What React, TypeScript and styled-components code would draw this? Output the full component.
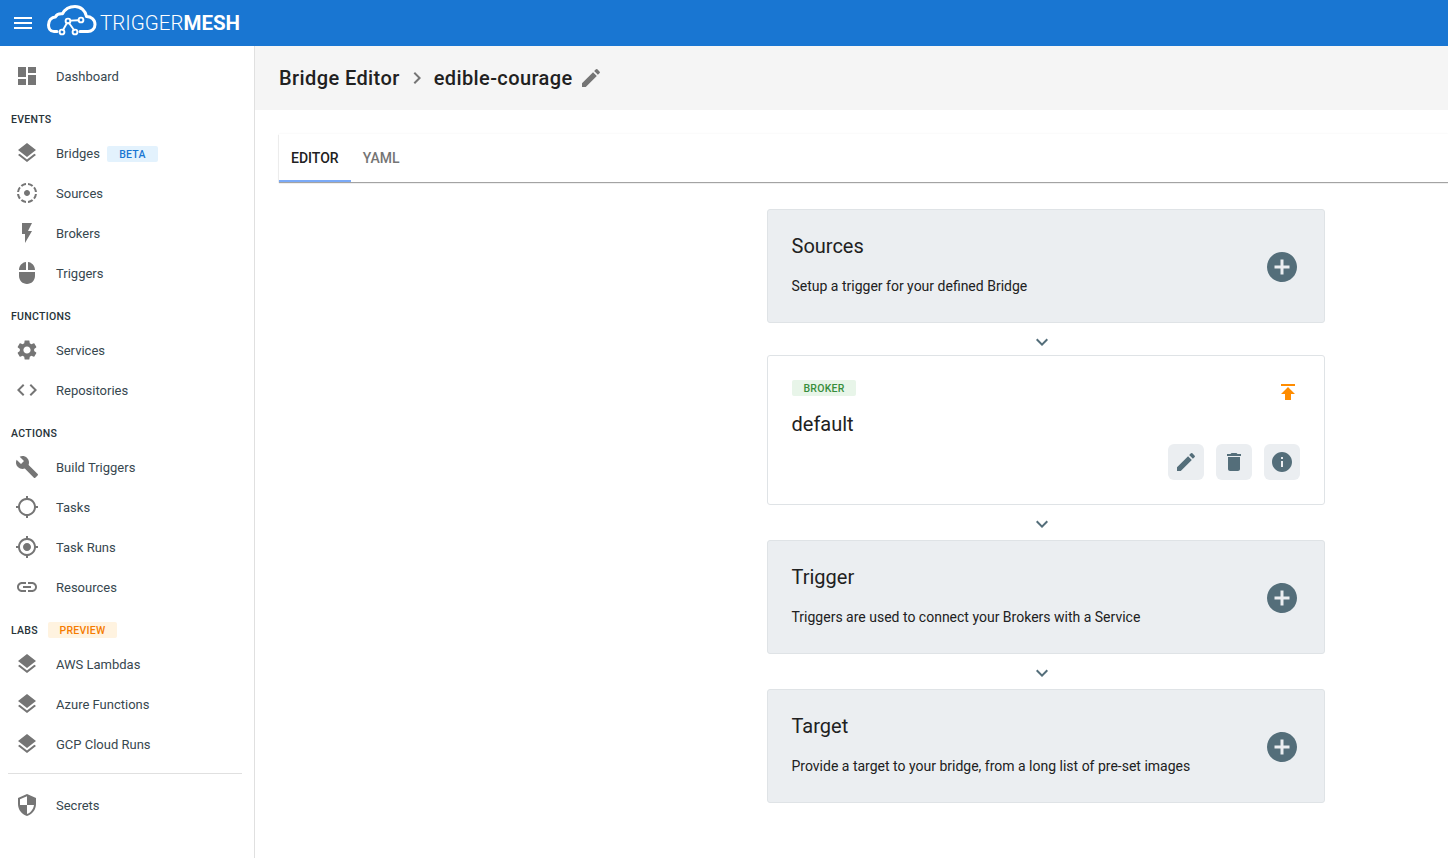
import React from "react";
import styled, {createGlobalStyle} from "styled-components";

const GlobalStyle = createGlobalStyle`
    html, body {
        margin: 0;
        padding: 0;
        height: 100%;
        overflow: hidden;
        background: #fff;
        font-family: Roboto, "Liberation Sans", sans-serif;
    }
`;

const icons = {
    menu: "M3 18h18v-2H3v2zm0-5h18v-2H3v2zm0-7v2h18V6H3z",
    dashboard: "M3 13h8V3H3v10zm0 8h8v-6H3v6zm10 0h8V11h-8v10zm0-18v6h8V3h-8z",
    layers: "M11.99 18.54l-7.37-5.73L3 14.07l9 7 9-7-1.63-1.27-7.38 5.74zM12 16l7.36-5.73L21 9l-9-7-9 7 1.63 1.27L12 16z",
    tilt: "M11 4.07V2.05c-2.01.2-3.84 1-5.32 2.21L7.1 5.69A7.941 7.941 0 0111 4.07zm7.32.19A9.949 9.949 0 0013 2.05v2.02c1.46.18 2.79.76 3.9 1.62l1.42-1.43zM19.93 11h2.02c-.2-2.01-1-3.84-2.21-5.32L18.31 7.1a7.941 7.941 0 011.62 3.9zM5.69 7.1L4.26 5.68A9.949 9.949 0 002.05 11h2.02c.18-1.46.76-2.79 1.62-3.9zM4.07 13H2.05c.2 2.01 1 3.84 2.21 5.32l1.43-1.43A7.868 7.868 0 014.07 13zM15 12c0-1.66-1.34-3-3-3s-3 1.34-3 3 1.34 3 3 3 3-1.34 3-3zm3.31 4.9l1.43 1.43a9.981 9.981 0 002.21-5.32h-2.02a7.945 7.945 0 01-1.62 3.89zM13 19.93v2.02c2.01-.2 3.84-1 5.32-2.21l-1.43-1.43c-1.1.86-2.43 1.44-3.89 1.62zm-7.32-.19A9.981 9.981 0 0011 21.95v-2.02a7.945 7.945 0 01-3.89-1.62l-1.43 1.43z",
    flash: "M7 2v11h3v9l7-12h-4l4-8z",
    mouse: "M13 1.07V9h7c0-4.08-3.05-7.44-7-7.93zM4 15c0 4.42 3.58 8 8 8s8-3.58 8-8v-4H4v4zm7-13.93C7.05 1.56 4 4.92 4 9h7V1.07z",
    settings: "M19.14 12.94c.04-.3.06-.61.06-.94 0-.32-.02-.64-.07-.94l2.03-1.58c.18-.14.23-.41.12-.61l-1.92-3.32c-.12-.22-.37-.29-.59-.22l-2.39.96c-.5-.38-1.03-.7-1.62-.94l-.36-2.54c-.04-.24-.24-.41-.48-.41h-3.84c-.24 0-.43.17-.47.41l-.36 2.54c-.59.24-1.13.57-1.62.94l-2.39-.96c-.22-.08-.47 0-.59.22L2.74 8.87c-.12.21-.08.47.12.61l2.03 1.58c-.05.3-.09.63-.09.94s.02.64.07.94l-2.03 1.58c-.18.14-.23.41-.12.61l1.92 3.32c.12.22.37.29.59.22l2.39-.96c.5.38 1.03.7 1.62.94l.36 2.54c.05.24.24.41.48.41h3.84c.24 0 .44-.17.47-.41l.36-2.54c.59-.24 1.13-.56 1.62-.94l2.39.96c.22.08.47 0 .59-.22l1.92-3.32c.12-.22.07-.47-.12-.61l-2.01-1.58zM12 15.6c-1.98 0-3.6-1.62-3.6-3.6s1.62-3.6 3.6-3.6 3.6 1.62 3.6 3.6-1.62 3.6-3.6 3.6z",
    code: "M9.4 16.6L4.8 12l4.6-4.6L8 6l-6 6 6 6 1.4-1.4zm5.2 0l4.6-4.6-4.6-4.6L16 6l6 6-6 6-1.4-1.4z",
    build: "M22.7 19l-9.1-9.1c.9-2.3.4-5-1.5-6.9-2-2-5-2.4-7.4-1.3L9 6 6 9 1.6 4.7C.4 7.1.9 10.1 2.9 12.1c1.9 1.9 4.6 2.4 6.9 1.5l9.1 9.1c.4.4 1 .4 1.4 0l2.3-2.3c.5-.4.5-1.1.1-1.4z",
    gpsOpen: "M20.94 11c-.46-4.17-3.77-7.48-7.94-7.94V1h-2v2.06C6.83 3.52 3.52 6.83 3.06 11H1v2h2.06c.46 4.17 3.77 7.48 7.94 7.94V23h2v-2.06c4.17-.46 7.48-3.77 7.94-7.94H23v-2h-2.06zM12 19c-3.87 0-7-3.13-7-7s3.13-7 7-7 7 3.13 7 7-3.13 7-7 7z",
    gpsFixed: "M12 8c-2.21 0-4 1.79-4 4s1.79 4 4 4 4-1.79 4-4-1.79-4-4-4zm8.94 3c-.46-4.17-3.77-7.48-7.94-7.94V1h-2v2.06C6.83 3.52 3.52 6.83 3.06 11H1v2h2.06c.46 4.17 3.77 7.48 7.94 7.94V23h2v-2.06c4.17-.46 7.48-3.77 7.94-7.94H23v-2h-2.06zM12 19c-3.87 0-7-3.13-7-7s3.13-7 7-7 7 3.13 7 7-3.13 7-7 7z",
    link: "M3.9 12c0-1.71 1.39-3.1 3.1-3.1h4V7H7c-2.76 0-5 2.24-5 5s2.24 5 5 5h4v-1.9H7c-1.71 0-3.1-1.39-3.1-3.1zM8 13h8v-2H8v2zm9-6h-4v1.9h4c1.71 0 3.1 1.39 3.1 3.1s-1.39 3.1-3.1 3.1h-4V17h4c2.76 0 5-2.24 5-5s-2.24-5-5-5z",
    security: "M12 1L3 5v6c0 5.55 3.84 10.74 9 12 5.16-1.26 9-6.45 9-12V5l-9-4zm0 10.99h7c-.53 4.12-3.28 7.79-7 8.94V12H5V6.3l7-3.11v8.8z",
    edit: "M3 17.25V21h3.75L17.81 9.94l-3.75-3.75L3 17.25zM20.71 7.04c.39-.39.39-1.02 0-1.41l-2.34-2.34a.9959.9959 0 00-1.41 0l-1.83 1.83 3.75 3.75 1.83-1.83z",
    trash: "M6 19c0 1.1.9 2 2 2h8c1.1 0 2-.9 2-2V7H6v12zM19 4h-3.5l-1-1h-5l-1 1H5v2h14V4z",
    info: "M12 2C6.48 2 2 6.48 2 12s4.48 10 10 10 10-4.48 10-10S17.52 2 12 2zm1 15h-2v-6h2v6zm0-8h-2V7h2v2z",
    add: "M12 2C6.48 2 2 6.48 2 12s4.48 10 10 10 10-4.48 10-10S17.52 2 12 2zm5 11h-4v4h-2v-4H7v-2h4V7h2v4h4v2z",
    publish: "M5 4v2h14V4H5zm0 10h4v6h6v-6h4l-7-7-7 7z",
    chevronDown: "M16.59 8.59L12 13.17 7.41 8.59 6 10l6 6 6-6z",
    chevronRight: "M10 6L8.59 7.41 13.17 12l-4.58 4.59L10 18l6-6z",
};

type IconName = keyof typeof icons;

const Svg = styled.svg<{ $size: number; $color: string }>`
    display: block;
    flex: none;
    width: ${({$size}) => $size}px;
    height: ${({$size}) => $size}px;
    fill: ${({$color}) => $color};
`;

const Icon: React.FC<{ name: IconName; size?: number; color?: string }> = ({name, size = 24, color = "#757575"}) =>
    <Svg viewBox="0 0 24 24" $size={size} $color={color}><path d={icons[name]}/></Svg>;

const Page = styled.div`
    width: 1448px;
    height: 858px;
    display: flex;
    flex-direction: column;
    overflow: hidden;
`;

const TopBar = styled.header`
    height: 46px;
    flex: none;
    background: #1976d2;
    display: flex;
    align-items: center;
    padding-left: 11px;
    color: #fff;
`;

const Logo = styled.svg`
    width: 50px;
    height: 32px;
    margin: 0 0 4px 12px;
    flex: none;
`;

const Brand = styled.div`
    margin-left: 3px;
    font-size: 20.5px;
    line-height: 46px;
    font-weight: 300;
    b {
        font-weight: 700;
    }
`;

const Body = styled.div`
    flex: 1;
    display: flex;
    min-height: 0;
`;

const Sidebar = styled.nav`
    width: 255px;
    flex: none;
    box-sizing: border-box;
    border-right: 1px solid #e0e0e0;
    padding: 10px 12px 0 8px;
`;

const NavRow = styled.div`
    height: 40px;
    display: flex;
    align-items: center;
    padding-left: 7px;
    font-size: 13px;
    color: #37474f;
`;

const NavIcon = styled.span`
    width: 41px;
    display: flex;
    flex: none;
`;

const SectionTitle = styled.div`
    height: 14px;
    margin: 16px 0 7px 3px;
    display: flex;
    align-items: center;
    font-size: 10.5px;
    font-weight: 500;
    letter-spacing: 0.3px;
    color: #263238;
`;

const Badge = styled.span<{ $bg: string; $fg: string; $width: number }>`
    display: inline-flex;
    align-items: center;
    justify-content: center;
    box-sizing: border-box;
    width: ${({$width}) => $width}px;
    height: 16px;
    border-radius: 2px;
    background: ${({$bg}) => $bg};
    color: ${({$fg}) => $fg};
    font-size: 10.5px;
    font-weight: 500;
    letter-spacing: 0.25px;
`;

const BetaBadge = styled(Badge)`
    margin: 2px 0 0 7px;
`;

const PreviewBadge = styled(Badge)`
    margin-left: 10px;
`;

const SideDivider = styled.hr`
    border: 0;
    height: 1px;
    background: #e0e0e0;
    margin: 9px 0 11px 0;
`;

const Main = styled.main`
    flex: 1;
    min-width: 0;
    display: flex;
    flex-direction: column;
`;

const TitleBar = styled.div`
    height: 64px;
    flex: none;
    background: #f5f5f5;
    display: flex;
    align-items: center;
    padding-left: 24px;
    font-size: 20px;
    font-weight: 500;
    letter-spacing: 0.4px;
    color: #212121;
`;

const CrumbSep = styled.span`
    margin: 0 5px;
    display: flex;
`;

const CrumbEdit = styled.span`
    margin-left: 6px;
    display: flex;
`;

const Tabs = styled.div`
    margin: 24px 0 0 24px;
    height: 48px;
    display: flex;
    flex: none;
    background: #fff;
    box-shadow: 0 1px 1px rgba(0, 0, 0, 0.35), 0 0 2px rgba(0, 0, 0, 0.06);
`;

const Tab = styled.div<{ $active?: boolean }>`
    height: 48px;
    box-sizing: border-box;
    padding: 2px 12px 0;
    min-width: 48px;
    display: flex;
    align-items: center;
    font-size: 14px;
    font-weight: 500;
    color: ${({$active}) => $active ? "#212121" : "#757575"};
    border-bottom: 2px solid ${({$active}) => $active ? "#7baaf7" : "transparent"};
`;

const Flow = styled.div`
    width: 558px;
    margin: 27px 0 0 512px;
    display: flex;
    flex-direction: column;
`;

const Card = styled.section<{ $filled?: boolean }>`
    box-sizing: border-box;
    width: 558px;
    height: ${({$filled}) => $filled ? 114 : 150}px;
    border: 1px solid #dfe3e6;
    border-radius: 3px;
    background: ${({$filled}) => $filled ? "#ebeef1" : "#fff"};
    padding: 0 24px;
    position: relative;
`;

const AddCardBody = styled.div`
    height: 100%;
    display: flex;
    align-items: center;
    justify-content: space-between;
`;

const CardTitle = styled.div`
    margin-left: -0.5px;
    font-size: 20px;
    line-height: 24px;
    color: #212121;
`;

const CardText = styled.div`
    margin: 16px 0 0 -0.5px;
    font-size: 14px;
    line-height: 24px;
    color: #212121;
`;

const AddIcon = styled.span`
    display: flex;
    margin: 2px 0 0 0;
`;

const Connector = styled.div<{ $height: number; $drop: number }>`
    height: ${({$height}) => $height}px;
    box-sizing: border-box;
    display: flex;
    align-items: center;
    justify-content: center;
    padding: ${({$drop}) => $drop}px 9px 0 0;
`;

const BrokerBadge = styled(Badge)`
    margin-top: 24px;
`;

const BrokerName = styled.div`
    margin: 16px 0 0 -0.5px;
    font-size: 20px;
    line-height: 24px;
    color: #212121;
`;

const PublishMark = styled.span`
    position: absolute;
    top: 24px;
    right: 24px;
    display: flex;
`;

const ActionRow = styled.div`
    margin-top: 8px;
    display: flex;
    justify-content: flex-end;
    gap: 12px;
`;

const ActionButton = styled.button`
    width: 36px;
    height: 36px;
    border: 0;
    border-radius: 6px;
    padding: 0;
    background: #ebeef1;
    display: flex;
    align-items: center;
    justify-content: center;
`;

const slate = "#546e7a";

const TmLogo = () => <Logo viewBox="0 0 50 32" fill="none" stroke="#fff" strokeWidth="3" strokeLinecap="round" strokeLinejoin="round">
    <path d="M10 26.5H7C3 26.5 1.5 23 1.5 20 1.5 15.5 4.5 12 8.5 12 9.5 9.5 12 8.5 15.5 8.8 18 4 23 1.5 28 1.5 34 1.5 38.5 6 39.5 11.5 44 11.5 48 14.5 48 19.5 48 24 44.5 26.5 41 26.5H33"/>
    <g strokeWidth="1.9">
        <path d="M16 25l4-7M22 18l5 7M23.5 15.6l8-.4"/>
        <circle cx="21" cy="16" r="2.4"/>
        <circle cx="34" cy="15" r="2.4"/>
        <circle cx="15" cy="27" r="2.4"/>
        <circle cx="28" cy="27" r="2.4"/>
    </g>
</Logo>;

const NavItem: React.FC<{ icon: IconName; children: React.ReactNode }> = ({icon, children}) =>
    <NavRow>
        <NavIcon><Icon name={icon}/></NavIcon>
        {children}
    </NavRow>;

const AddCard: React.FC<{ title: string; text: string }> = ({title, text}) =>
    <Card $filled>
        <AddCardBody>
            <div>
                <CardTitle>{title}</CardTitle>
                <CardText>{text}</CardText>
            </div>
            <AddIcon><Icon name="add" size={36} color={slate}/></AddIcon>
        </AddCardBody>
    </Card>;

const Chevron: React.FC<{ height: number; drop: number }> = ({height, drop}) =>
    <Connector $height={height} $drop={drop}><Icon name="chevronDown" size={24} color={slate}/></Connector>;

export default function App() {
    return <Page>
        <GlobalStyle/>
        <TopBar>
            <Icon name="menu" size={24} color="#fff"/>
            <TmLogo/>
            <Brand>TRIGGER<b>MESH</b></Brand>
        </TopBar>
        <Body>
            <Sidebar>
                <NavItem icon="dashboard">Dashboard</NavItem>
                <SectionTitle>EVENTS</SectionTitle>
                <NavItem icon="layers">
                    Bridges
                    <BetaBadge $bg="#e3f2fd" $fg="#1976d2" $width={51}>BETA</BetaBadge>
                </NavItem>
                <NavItem icon="tilt">Sources</NavItem>
                <NavItem icon="flash">Brokers</NavItem>
                <NavItem icon="mouse">Triggers</NavItem>
                <SectionTitle>FUNCTIONS</SectionTitle>
                <NavItem icon="settings">Services</NavItem>
                <NavItem icon="code">Repositories</NavItem>
                <SectionTitle>ACTIONS</SectionTitle>
                <NavItem icon="build">Build Triggers</NavItem>
                <NavItem icon="gpsOpen">Tasks</NavItem>
                <NavItem icon="gpsFixed">Task Runs</NavItem>
                <NavItem icon="link">Resources</NavItem>
                <SectionTitle>
                    LABS
                    <PreviewBadge $bg="#fff3e0" $fg="#f57c00" $width={69}>PREVIEW</PreviewBadge>
                </SectionTitle>
                <NavItem icon="layers">AWS Lambdas</NavItem>
                <NavItem icon="layers">Azure Functions</NavItem>
                <NavItem icon="layers">GCP Cloud Runs</NavItem>
                <SideDivider/>
                <NavItem icon="security">Secrets</NavItem>
            </Sidebar>
            <Main>
                <TitleBar>
                    Bridge Editor
                    <CrumbSep><Icon name="chevronRight" size={24} color="#757575"/></CrumbSep>
                    edible-courage
                    <CrumbEdit><Icon name="edit" size={24} color="#757575"/></CrumbEdit>
                </TitleBar>
                <Tabs>
                    <Tab $active>EDITOR</Tab>
                    <Tab>YAML</Tab>
                </Tabs>
                <Flow>
                    <AddCard title="Sources" text="Setup a trigger for your defined Bridge"/>
                    <Chevron height={32} drop={6}/>
                    <Card>
                        <BrokerBadge $bg="#e8f5e9" $fg="#388e3c" $width={64}>BROKER</BrokerBadge>
                        <BrokerName>default</BrokerName>
                        <PublishMark><Icon name="publish" size={24} color="#ff8c00"/></PublishMark>
                        <ActionRow>
                            <ActionButton><Icon name="edit" color={slate}/></ActionButton>
                            <ActionButton><Icon name="trash" color={slate}/></ActionButton>
                            <ActionButton><Icon name="info" color={slate}/></ActionButton>
                        </ActionRow>
                    </Card>
                    <Chevron height={35} drop={3}/>
                    <AddCard title="Trigger" text="Triggers are used to connect your Brokers with a Service"/>
                    <Chevron height={35} drop={3}/>
                    <AddCard title="Target" text="Provide a target to your bridge, from a long list of pre-set images"/>
                </Flow>
            </Main>
        </Body>
    </Page>;
}
